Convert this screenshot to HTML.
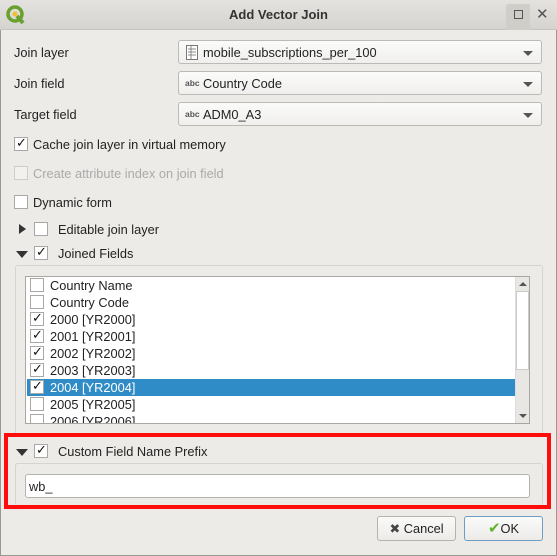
<!DOCTYPE html>
<html><head><meta charset="utf-8"><style>
*{box-sizing:border-box;margin:0;padding:0}
body{width:557px;height:556px;overflow:hidden;background:#edebe7;font-family:"Liberation Sans","DejaVu Sans",sans-serif;font-size:12.8px;color:#222;position:relative}
.a{position:absolute}
.win{position:absolute;left:0;top:0;width:557px;height:556px;border:1px solid #9a9893;border-top:none}
.title{left:0;top:0;width:557px;height:30px;background:linear-gradient(#e4e2de,#d6d4d0);border-bottom:1px solid #c8c6c2}
.title span{position:absolute;left:0;width:557px;top:7px;text-align:center;font-weight:bold;font-size:13px;color:#333}
.combo{height:24px;background:linear-gradient(#fbfbfa,#f0efed);border:1px solid #bcbab5;border-radius:3px;left:178px;width:364px}
.combo .t{position:absolute;left:24px;top:4px}
.combo .dd{position:absolute;right:8px;top:10px;width:0;height:0;border-left:5px solid transparent;border-right:5px solid transparent;border-top:5px solid #555}
.abc{position:absolute;left:6px;top:6px;font-size:8.5px;font-weight:bold;color:#555}
.cb{width:14px;height:14px;background:#fff;border:1px solid #aaa8a4}
.ck::after{content:"✓";position:absolute;left:1px;top:-3px;font-size:13px;font-weight:bold;color:#111}
.tri-r{width:0;height:0;border-top:5px solid transparent;border-bottom:5px solid transparent;border-left:7px solid #333}
.tri-d{width:0;height:0;border-left:6px solid transparent;border-right:6px solid transparent;border-top:7px solid #333}
.row{position:absolute;left:1px;width:489px;height:17px}
.row .cb{position:absolute;left:3px;top:1px}
.row .tx{position:absolute;left:23px;top:1px}
.btn{height:25px;border:1px solid #b5b3ae;border-radius:3px;background:linear-gradient(#fafaf9,#ecebe8);text-align:center;line-height:23px}
</style></head><body>
<div class="win"></div>
<div class="a title"><span>Add Vector Join</span>
<svg class="a" style="left:6px;top:5px" width="20" height="20" viewBox="0 0 20 20"><circle cx="9" cy="9" r="7" fill="none" stroke="#6aa02e" stroke-width="3.5"/><path d="M11 11 L17 18" stroke="#6aa02e" stroke-width="4"/><circle cx="9" cy="9" r="2.5" fill="#f2c031"/></svg>
<div class="a" style="left:506px;top:4px;width:24px;height:26px;background:#d0cec9;border-radius:3px 0 0 0"></div>
<div class="a" style="left:514px;top:10px;width:9px;height:9px;border:1.5px solid #555"></div>
<div class="a" style="left:536px;top:5px;font-size:15px;color:#555">✕</div>
</div>

<div class="a" style="left:14px;top:45px">Join layer</div>
<div class="a" style="left:14px;top:76px">Join field</div>
<div class="a" style="left:14px;top:107px">Target field</div>

<div class="a combo" style="top:40px"><svg class="a" style="left:7px;top:4px" width="12" height="15"><rect x=".5" y=".5" width="11" height="14" fill="#fff" stroke="#777"/><path d="M2 4h8M2 7h8M2 10h8M5 1v13" stroke="#888"/></svg><span class="t">mobile_subscriptions_per_100</span><div class="dd"></div></div>
<div class="a combo" style="top:71px"><span class="abc">abc</span><span class="t">Country Code</span><div class="dd"></div></div>
<div class="a combo" style="top:102px"><span class="abc">abc</span><span class="t">ADM0_A3</span><div class="dd"></div></div>

<div class="a cb ck" style="left:14px;top:137px"></div><div class="a" style="left:33px;top:137px">Cache join layer in virtual memory</div>
<div class="a cb" style="left:14px;top:166px;border-color:#cfcdc9;background:#f2f1ee"></div><div class="a" style="left:33px;top:166px;color:#aaa">Create attribute index on join field</div>
<div class="a cb" style="left:14px;top:195px"></div><div class="a" style="left:33px;top:195px">Dynamic form</div>

<div class="a tri-r" style="left:19px;top:224px"></div><div class="a cb" style="left:34px;top:222px"></div><div class="a" style="left:58px;top:222px">Editable join layer</div>
<div class="a tri-d" style="left:16px;top:251px"></div><div class="a cb ck" style="left:34px;top:246px"></div><div class="a" style="left:58px;top:246px">Joined Fields</div>

<div class="a" style="left:15px;top:265px;width:528px;height:170px;border:1px solid #d6d4cf;border-bottom:none;border-radius:3px"></div>
<div class="a" style="left:25px;top:276px;width:505px;height:148px;background:#fff;border:1px solid #a9a7a2;overflow:hidden">
<div class="row" style="top:0"><div class="cb"></div><span class="tx">Country Name</span></div>
<div class="row" style="top:17px"><div class="cb"></div><span class="tx">Country Code</span></div>
<div class="row" style="top:34px"><div class="cb ck a" style="left:3px;top:1px"></div><span class="tx">2000 [YR2000]</span></div>
<div class="row" style="top:51px"><div class="cb ck a" style="left:3px;top:1px"></div><span class="tx">2001 [YR2001]</span></div>
<div class="row" style="top:68px"><div class="cb ck a" style="left:3px;top:1px"></div><span class="tx">2002 [YR2002]</span></div>
<div class="row" style="top:85px"><div class="cb ck a" style="left:3px;top:1px"></div><span class="tx">2003 [YR2003]</span></div>
<div class="row" style="top:102px;background:#308cc6;color:#fff"><div class="cb ck a" style="left:3px;top:1px"></div><span class="tx">2004 [YR2004]</span></div>
<div class="row" style="top:119px"><div class="cb"></div><span class="tx">2005 [YR2005]</span></div>
<div class="row" style="top:136px"><div class="cb"></div><span class="tx">2006 [YR2006]</span></div>
<div class="a" style="left:489px;top:0;width:14px;height:146px;background:#e8e7e4;border-left:1px solid #ddd"><div class="a" style="left:0;top:14px;width:13px;height:79px;background:#fff;border:1px solid #ccc"></div><div class="a" style="left:3px;top:5px;border-left:4px solid transparent;border-right:4px solid transparent;border-bottom:4px solid #555"></div><div class="a" style="left:3px;top:137px;border-left:4px solid transparent;border-right:4px solid transparent;border-top:4px solid #555"></div></div>
</div>

<div class="a" style="left:15px;top:463px;width:528px;height:43px;border:1px solid #d6d4cf;border-bottom:none;border-radius:3px"></div>
<div class="a tri-d" style="left:16px;top:449px"></div><div class="a cb ck" style="left:34px;top:444px"></div><div class="a" style="left:58px;top:444px">Custom Field Name Prefix</div>
<div class="a" style="left:25px;top:474px;width:505px;height:24px;background:#fff;border:1px solid #b5b3ae;border-radius:3px;padding:4px 3px">wb_</div>
<div class="a" style="left:4px;top:433px;width:547px;height:76px;border:4px solid #ff0d0d"></div>

<div class="a btn" style="left:377px;top:516px;width:79px"><b style="color:#444">✖</b> Cancel</div>
<div class="a btn" style="left:464px;top:516px;width:79px;border-color:#6f9cc4"><span style="color:#5fb32f;font-weight:bold;font-size:15px">✔</span>OK</div>
</body></html>
